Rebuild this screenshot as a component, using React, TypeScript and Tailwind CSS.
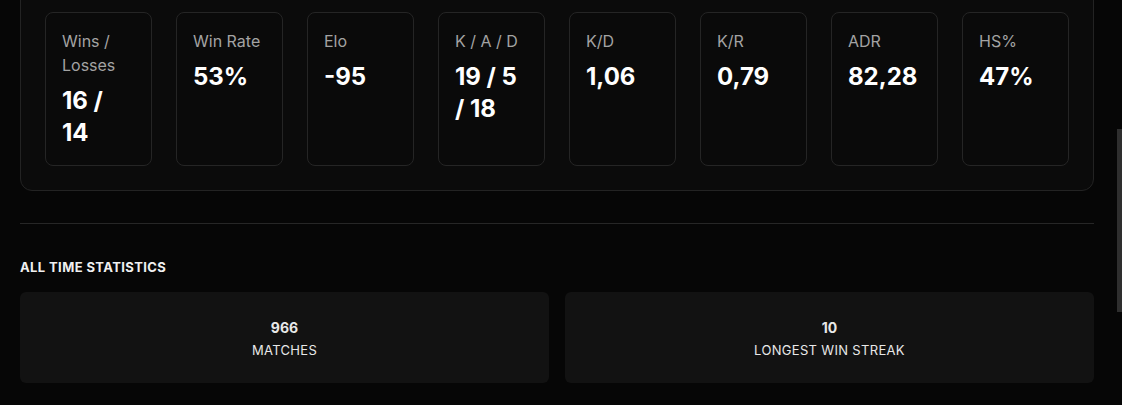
import React from "react";

const stats = [
  { label: "Wins / Losses", value: "16 / 14" },
  { label: "Win Rate", value: "53%" },
  { label: "Elo", value: "-95" },
  { label: "K / A / D", value: "19 / 5 / 18" },
  { label: "K/D", value: "1,06" },
  { label: "K/R", value: "0,79" },
  { label: "ADR", value: "82,28" },
  { label: "HS%", value: "47%" },
];

export default function App() {
  return (
    <div className="relative h-[405px] w-[1122px] overflow-hidden bg-[#060606] font-['Inter',sans-serif]">
      <div className="pl-5 pr-[28px]">
        <div className="-mt-[13px] rounded-xl border border-[#232323] bg-[#0b0b0b] p-6">
          <div className="grid grid-cols-8 gap-6">
            {stats.map((s) => (
              <div
                key={s.label}
                className="rounded-lg border border-[#252525] bg-[#0a0a0a] p-4"
              >
                <div className="mb-2 text-base leading-6 text-[#a3a3a3]">{s.label}</div>
                <div className="text-2xl font-bold leading-8 text-white">{s.value}</div>
              </div>
            ))}
          </div>
        </div>
        <div className="mt-8 h-px bg-[#262626]" />
        <div className="mt-[35px] text-[13px] font-bold leading-4 tracking-[0.03em] text-[#f0f0f0]">
          ALL TIME STATISTICS
        </div>
        <div className="mt-[17px] grid grid-cols-2 gap-4">
          <div className="flex h-[91px] flex-col items-center justify-center rounded-md bg-[#121212] pt-[3px] text-[#e8e8e8]">
            <div className="text-sm font-bold leading-5">966</div>
            <div className="mt-[2px] text-[13px] leading-5 tracking-[0.025em]">MATCHES</div>
          </div>
          <div className="flex h-[91px] flex-col items-center justify-center rounded-md bg-[#121212] pt-[3px] text-[#e8e8e8]">
            <div className="text-sm font-bold leading-5">10</div>
            <div className="mt-[2px] text-[13px] leading-5 tracking-[0.025em]">LONGEST WIN STREAK</div>
          </div>
        </div>
      </div>
      <div className="absolute right-0 top-[129px] h-[183px] w-[5px] bg-[#2e2e2e]" />
    </div>
  );
}
